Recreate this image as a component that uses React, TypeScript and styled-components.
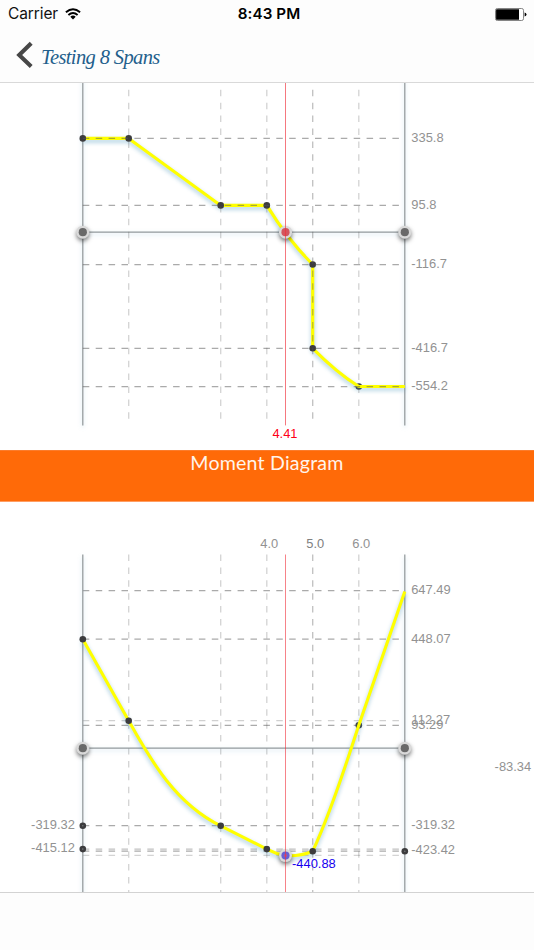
import React from "react";
import styled, { createGlobalStyle } from "styled-components";

const GlobalStyle = createGlobalStyle`
  *, *::before, *::after { box-sizing: border-box; }
  body { margin: 0; background: #fff; }
`;

const Screen = styled.div`
  width: 534px;
  height: 950px;
  display: flex;
  flex-direction: column;
  overflow: hidden;
  background: #fff;
`;

const TopBar = styled.header`
  height: 83px;
  flex: none;
  background: #fdfdfd;
  border-bottom: 1px solid #d9d9d9;
`;

const StatusBar = styled.div`
  height: 28px;
  display: grid;
  grid-template-columns: 1fr auto 1fr;
  align-items: center;
  padding: 0 7px 0 8px;
  font-family: Inter, sans-serif;
  font-size: 15.5px;
  line-height: 28px;
  color: #111;
`;

const Carrier = styled.div`
  display: flex;
  align-items: center;
  gap: 7px;
  letter-spacing: -0.1px;
`;

const Clock = styled.div`
  font-weight: 600;
  font-size: 15.2px;
  letter-spacing: 0.1px;
  color: #000;
  padding-left: 3px;
`;

const Battery = styled.svg`
  display: block;
  justify-self: end;
`;

const NavRow = styled.div`
  height: 54px;
  display: flex;
  align-items: center;
  padding-left: 15px;
`;

const BackIcon = styled.svg`
  display: block;
  flex: none;
  width: 20px;
  height: 30px;
`;

const NavTitle = styled.h1`
  margin: 3px 0 0 6px;
  font: italic 400 20.5px/28px "Liberation Serif", serif;
  letter-spacing: -0.62px;
  white-space: nowrap;
  color: #235f8c;
`;

const ChartSvg = styled.svg`
  display: block;
  flex: none;
  font-family: "Liberation Sans", Arial, sans-serif;
  font-size: 12.9px;
`;

const Label = styled.text<{ $color?: string }>`
  fill: ${(p) => p.$color ?? "#929292"};
`;

const Banner = styled.h2`
  margin: 0;
  height: 52px;
  flex: none;
  background: #ff6a08;
  border-top: 1px solid #fb7c2c;
  border-bottom: 1px solid #ff9e63;
  color: #fff4ec;
  text-align: center;
  font: 400 19.6px/24px Lato, sans-serif;
  letter-spacing: 0.2px;
`;

const BottomBar = styled.footer`
  flex: 1;
  background: #fdfdfd;
  border-top: 1px solid #d3d3d3;
`;

const LEFT = 82.8;
const RIGHT = 404.8;
const CURSOR = 285.5;
const COLUMNS = [128.7, 220.7, 266.8, 312.7, 358.8];

type Row = { y: number; opacity?: number };

function Grid({ rows, top, bottom }: { rows: Row[]; top: number; bottom: number }) {
  return (
    <g fill="none" strokeDasharray="6.5 6.4">
      {rows.map((r) => (
        <path
          key={r.y}
          d={`M${LEFT} ${r.y}H${RIGHT - 5}`}
          stroke="#555"
          strokeOpacity={r.opacity ?? 0.5}
          strokeWidth="1.25"
        />
      ))}
      {COLUMNS.map((x) => (
        <path
          key={x}
          d={`M${x} ${top}V${bottom}`}
          stroke="#555"
          strokeOpacity={x === 312.7 ? 0.37 : 0.26}
          strokeWidth="1.3"
        />
      ))}
    </g>
  );
}

function Axes({ top, bottom, zero, shadow }: { top: number; bottom: number; zero: number; shadow: string }) {
  return (
    <g filter={`url(#${shadow})`} stroke="#949b9d" strokeWidth="1.25" fill="none">
      <path d={`M${LEFT} ${top}V${bottom}M${RIGHT} ${top}V${bottom}M${LEFT} ${zero}H${RIGHT}`} />
    </g>
  );
}

function Shadows({ id }: { id: string }) {
  return (
    <defs>
      <filter id={`${id}-line`} filterUnits="userSpaceOnUse" x="0" y="0" width="534" height="950" colorInterpolationFilters="sRGB">
        <feDropShadow dx="0" dy="2.4" stdDeviation="2.2" floodColor="#3f91b7" floodOpacity="0.48" />
      </filter>
      <filter id={`${id}-axis`} filterUnits="userSpaceOnUse" x="0" y="0" width="534" height="950" colorInterpolationFilters="sRGB">
        <feDropShadow dx="0" dy="2" stdDeviation="2.2" floodColor="#3f91b7" floodOpacity="0.28" />
      </filter>
      <filter id={`${id}-knob`} x="-100%" y="-100%" width="300%" height="300%" colorInterpolationFilters="sRGB">
        <feDropShadow dx="0" dy="2.4" stdDeviation="2.1" floodColor="#000" floodOpacity="0.5" />
      </filter>
    </defs>
  );
}

function Knob({ x, y, fill = "#696969", shadow }: { x: number; y: number; fill?: string; shadow: string }) {
  return (
    <g>
      <circle cx={x} cy={y} r="6.5" fill="#d9d9d9" filter={`url(#${shadow})`} />
      <circle cx={x} cy={y} r="4.1" fill={fill} />
    </g>
  );
}

function Points({ points }: { points: number[][] }) {
  return (
    <g fill="#3c3c3e">
      {points.map(([x, y]) => (
        <circle key={`${x}-${y}`} cx={x} cy={y} r="3.3" />
      ))}
    </g>
  );
}

function ShearChart() {
  const rows: Row[] = [{ y: 138.4 }, { y: 205.4 }, { y: 264.5 }, { y: 348.3 }, { y: 386.5 }];
  const labels: [number, string][] = [
    [141.8, "335.8"],
    [208.8, "95.8"],
    [267.9, "-116.7"],
    [351.7, "-416.7"],
    [389.9, "-554.2"],
  ];
  return (
    <ChartSvg width="534" height="367" viewBox="0 83 534 367">
      <Shadows id="shear" />
      <Axes top={70} bottom={425.4} zero={232.2} shadow="shear-axis" />
      <Points points={[[358.8, 386.5]]} />
      <path
        d="M82.8 138.4H128.7L220.7 205.4H266.8Q288 240 312.7 264.5V348.3Q336 372 358.8 386.5H404.8"
        fill="none"
        stroke="#ffff00"
        strokeWidth="3.1"
        strokeLinejoin="round"
        filter="url(#shear-line)"
      />
      <Points points={[[82.8, 138.4], [128.7, 138.4], [220.7, 205.4], [266.8, 205.4], [312.7, 264.5], [312.7, 348.3]]} />
      <Grid rows={rows} top={89.8} bottom={419.4} />
      <Knob x={LEFT} y={232.2} shadow="shear-knob" />
      <Knob x={RIGHT} y={232.2} shadow="shear-knob" />
      <Knob x={CURSOR} y={232.2} fill="#d4555c" shadow="shear-knob" />
      <path d={`M${CURSOR} 83V425.4`} stroke="#f0303a" strokeOpacity="0.65" />
      {labels.map(([y, text]) => (
        <Label key={text} x="411.3" y={y}>{text}</Label>
      ))}
      <Label x="272.4" y="438" $color="#ff0018">4.41</Label>
    </ChartSvg>
  );
}

function MomentChart() {
  const rows: Row[] = [
    { y: 590.5 },
    { y: 639.2 },
    { y: 720.6, opacity: 0.28 },
    { y: 725.4 },
    { y: 825.6 },
    { y: 849.1, opacity: 0.36 },
    { y: 851, opacity: 0.5 },
    { y: 855.3, opacity: 0.25 },
  ];
  const labels: [number, number, string][] = [
    [260.3, 548, "4.0"],
    [306.3, 548, "5.0"],
    [352.3, 548, "6.0"],
    [411.2, 593.9, "647.49"],
    [411.2, 642.6, "448.07"],
    [411.6, 724, "112.27"],
    [411.2, 728.6, "93.29"],
    [494.6, 770.9, "-83.34"],
    [411.3, 828.9, "-319.32"],
    [411.3, 854.2, "-423.42"],
    [31.1, 828.9, "-319.32"],
    [31.1, 852.2, "-415.12"],
  ];
  return (
    <ChartSvg width="534" height="390" viewBox="0 502 534 390">
      <Shadows id="moment" />
      <Grid rows={rows} top={554.5} bottom={892} />
      <Axes top={554.5} bottom={894} zero={748.2} shadow="moment-axis" />
      <Points points={[[358.8, 725.2]]} />
      <path
        d="M82.8 639.2L128.7 720.8C151 761 176 804 220.7 825.8L266.8 849.1Q276 854 285.5 855.6Q300 856.5 312.7 851.2C332 810 347 761 358.8 725.2L404.8 591.5"
        fill="none"
        stroke="#ffff00"
        strokeWidth="3.1"
        strokeLinejoin="round"
        filter="url(#moment-line)"
      />
      <Points
        points={[
          [82.8, 639.2], [128.7, 720.8], [220.7, 825.8], [266.8, 849.1], [312.7, 851.2],
          [82.8, 825.8], [82.8, 849.1], [404.8, 851.2],
        ]}
      />
      <g fill="#74787a">
        <circle cx="82.8" cy="825.8" r="0.8" />
        <circle cx="82.8" cy="849.1" r="0.8" />
        <circle cx="404.8" cy="851.2" r="0.8" />
      </g>
      <Knob x={LEFT} y={748.2} shadow="moment-knob" />
      <Knob x={RIGHT} y={748.2} shadow="moment-knob" />
      <Knob x={CURSOR} y={855.6} fill="#675fd4" shadow="moment-knob" />
      <circle cx={CURSOR} cy="855.4" r="1.5" fill="#c54e82" />
      <path d={`M${CURSOR} 554.5V892`} stroke="#f0303a" strokeOpacity="0.6" />
      {labels.map(([x, y, text]) => (
        <Label key={`${x}-${y}`} x={x} y={y} $color={text === "5.0" ? "#808080" : undefined}>{text}</Label>
      ))}
      <Label x="292" y="867.9" $color="#1500ef">-440.88</Label>
    </ChartSvg>
  );
}

export default function App() {
  return (
    <Screen>
      <GlobalStyle />
      <TopBar>
        <StatusBar>
          <Carrier>
            Carrier
            <svg width="16" height="12" viewBox="0 0 16 12" fill="none" stroke="#000" strokeWidth="1.9">
              <path d="M0.9 4.3Q8 -2 15.1 4.3M3.4 7Q8 3 12.6 7" />
              <path d="M5.3 8.7Q8 6.5 10.7 8.7L8 11.6Z" fill="#000" stroke="none" />
            </svg>
          </Carrier>
          <Clock>8:43 PM</Clock>
          <Battery width="32" height="13" viewBox="0 0 32 13">
            <rect x="0.5" y="0.5" width="28" height="12" rx="1.8" fill="#fff" stroke="#777" strokeWidth="0.9" />
            <path d="M2 1.2H24V11.8H2Q1.1 11.8 1.1 10.9V2.1Q1.1 1.2 2 1.2Z" fill="#000" />
            <path d="M29.6 4.5Q31.5 5 31.5 6.5T29.6 8.5Z" fill="#000" />
          </Battery>
        </StatusBar>
        <NavRow>
          <BackIcon viewBox="0 0 20 30" fill="none" stroke="#474747" strokeWidth="4.1">
            <path d="M16.2 3.2L4.2 15L16.2 26.5" />
          </BackIcon>
          <NavTitle>Testing 8 Spans</NavTitle>
        </NavRow>
      </TopBar>
      <ShearChart />
      <Banner>Moment Diagram</Banner>
      <MomentChart />
      <BottomBar />
    </Screen>
  );
}
